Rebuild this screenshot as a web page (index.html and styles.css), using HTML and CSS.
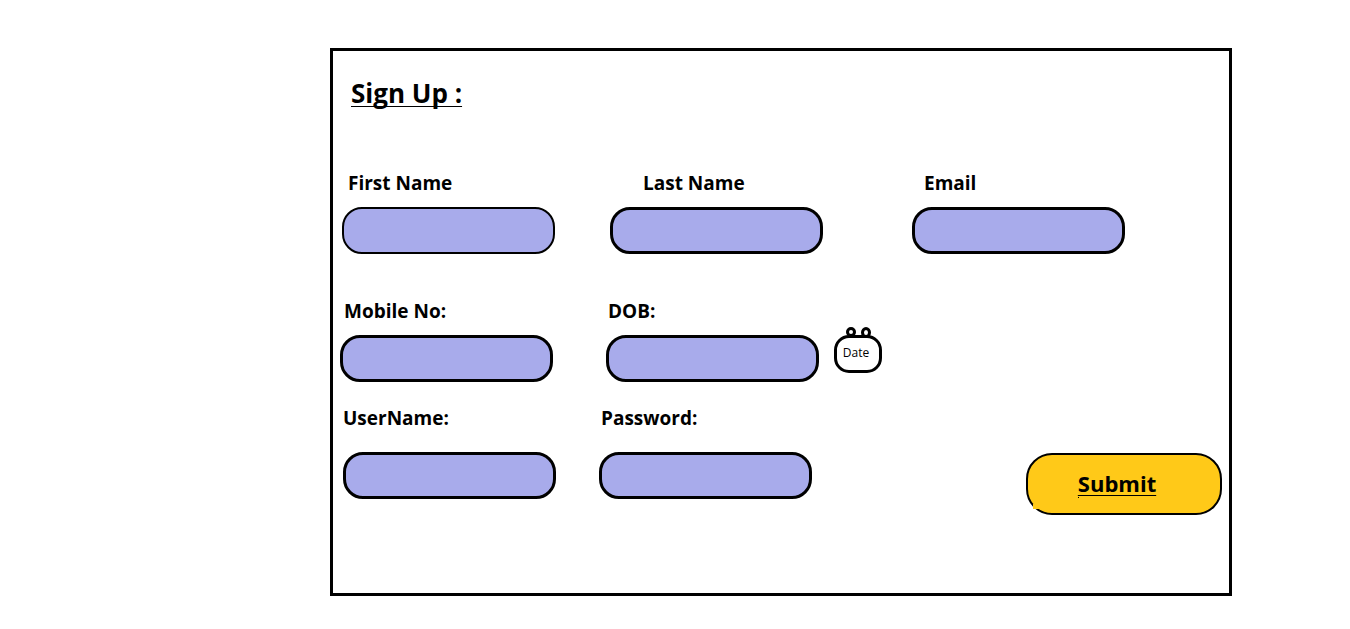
FILE: index.html
```html
<!DOCTYPE html>
<html lang="en">
<head>
<meta charset="utf-8">
<title>Sign Up</title>
<link rel="stylesheet" href="styles.css">
</head>
<body>
<main class="panel">
  <h1 class="title">Sign Up :</h1>
  <form class="form">
    <div class="row row-name">
      <div class="field">
        <label class="label label-first" for="first">First Name</label>
        <input class="input input-thin" id="first" type="text">
      </div>
      <div class="field">
        <label class="label label-last" for="last">Last Name</label>
        <input class="input" id="last" type="text">
      </div>
      <div class="field">
        <label class="label label-email" for="email">Email</label>
        <input class="input" id="email" type="email">
      </div>
    </div>
    <div class="row row-contact">
      <div class="field">
        <label class="label" for="mobile">Mobile No:</label>
        <input class="input" id="mobile" type="tel">
      </div>
      <div class="field">
        <label class="label label-dob" for="dob">DOB:</label>
        <input class="input" id="dob" type="text">
      </div>
      <button class="date" type="button">
        <svg class="rings" width="26" height="12" viewBox="0 0 26 12" fill="#fff" stroke="#000" stroke-width="3" aria-hidden="true">
          <circle cx="5" cy="5" r="3.5"/>
          <ellipse cx="20" cy="5.5" rx="3.5" ry="4"/>
        </svg>
        Date
      </button>
    </div>
    <div class="row row-account">
      <div class="field field-spaced">
        <label class="label label-user" for="user">UserName:</label>
        <input class="input" id="user" type="text">
      </div>
      <div class="field field-spaced">
        <label class="label label-pass" for="pass">Password:</label>
        <input class="input" id="pass" type="password">
      </div>
      <button class="submit" type="submit"><span class="submit-text">Submit</span></button>
    </div>
  </form>
</main>
</body>
</html>
```
FILE: styles.css
```css
* {
  box-sizing: border-box;
}

body {
  margin: 0;
  padding: 48px 118px 32px 330px;
  background: #fff;
  color: #000;
  font-family: "Open Sans", "Noto Sans", sans-serif;
}

.panel {
  padding: 24px 0 78px;
  border: 3px solid #000;
}

.title {
  margin: 0 0 60px 18px;
  font-size: 26px;
  line-height: 36px;
  font-weight: 700;
  text-decoration: underline;
  text-decoration-thickness: 1px;
  text-underline-offset: 3px;
  text-decoration-skip-ink: none;
}

.row {
  display: grid;
  align-items: start;
}

.row-name {
  grid-template-columns: 268px 302px 1fr;
  padding-left: 9px;
  margin-bottom: 45px;
}

.row-contact {
  grid-template-columns: 266px 228px 1fr;
  padding-left: 7px;
  margin-bottom: 24px;
}

.row-account {
  grid-template-columns: 256px 256px 1fr;
  padding: 0 7px 0 10px;
}

.field {
  display: flex;
  flex-direction: column;
  align-items: flex-start;
  gap: 12px;
}

.field-spaced {
  gap: 22px;
}

.label {
  padding-left: 4px;
  font-size: 19px;
  line-height: 24px;
  font-weight: 700;
}

.label-first {
  padding-left: 6px;
}

.label-last {
  padding-left: 33px;
}

.label-email {
  padding-left: 12px;
}

.label-dob,
.label-pass {
  padding-left: 2px;
}

.label-user {
  padding-left: 0;
}

.input {
  width: 213px;
  height: 47px;
  padding: 0 16px;
  border: 3px solid #000;
  border-radius: 20px;
  background: #a8abeb;
  font: inherit;
  font-size: 16px;
}

.input-thin {
  border-width: 2px;
}

.date {
  position: relative;
  width: 48px;
  height: 38px;
  margin-top: 36px;
  padding: 0 4px 2px 0;
  border: 3px solid #000;
  border-radius: 15px;
  background: #fff;
  color: #000;
  font-family: inherit;
  font-size: 12px;
  line-height: 16px;
}

.rings {
  position: absolute;
  top: -11px;
  left: 9px;
  clip-path: inset(0 0 2px 0);
}

.submit {
  position: relative;
  justify-self: end;
  width: 196px;
  height: 62px;
  margin-top: 47px;
  padding: 0 14px 2px 0;
  border: 2px solid #000;
  border-radius: 26px;
  background: #ffc918;
  color: #000;
  font-family: inherit;
  font-size: 22px;
  line-height: 30px;
  font-weight: 700;
}

/* small break in the outline at the lower left corner */
.submit::before {
  content: "";
  position: absolute;
  left: 5px;
  bottom: 4px;
  width: 7px;
  height: 5px;
  background: #ffc918;
}

.submit-text {
  text-decoration: underline;
  text-decoration-thickness: 1px;
  text-underline-offset: 3px;
}

.submit::after {
  content: "";
  position: absolute;
  left: 50px;
  bottom: 15px;
  width: 1px;
  height: 1px;
  background: #000;
}
```
